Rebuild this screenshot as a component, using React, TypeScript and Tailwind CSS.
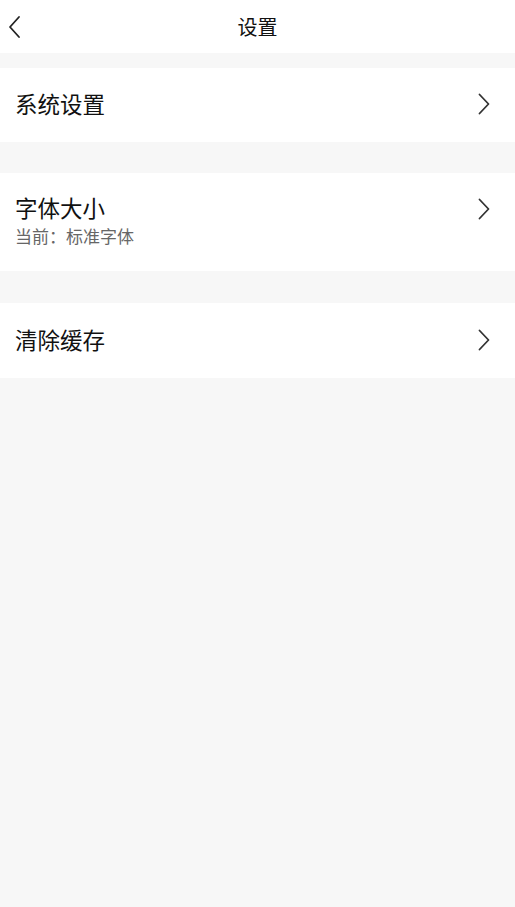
const font = { fontFamily: '"Noto Sans CJK SC", "Noto Sans", sans-serif' };

function Chevron() {
  return (
    <svg width="14" height="22" viewBox="0 0 14 22" className="shrink-0">
      <path d="M2.5 1.5 L11.5 11 L2.5 20.5" fill="none" stroke="#333" strokeWidth="1.8" strokeLinecap="round" strokeLinejoin="round" />
    </svg>
  );
}

function Row({ title, h }: { title: string; h: string }) {
  return (
    <div className={`bg-white flex items-center justify-between pl-[15px] pr-[24px] ${h}`}>
      <span className="text-[22.5px] leading-[28px] text-[#111] -mt-[4px]">{title}</span>
      <div className="-mt-[2px]">
        <Chevron />
      </div>
    </div>
  );
}

export default function App() {
  return (
    <div className="w-[515px] h-[907px] bg-[#f7f7f7] flex flex-col" style={font}>
      <div className="h-[53px] bg-white relative flex items-center justify-center">
        <svg width="14" height="24" viewBox="0 0 14 24" className="absolute left-[7px] top-[15px]">
          <path d="M12 2 L3 12 L12 22" fill="none" stroke="#222" strokeWidth="1.8" strokeLinecap="round" strokeLinejoin="round" />
        </svg>
        <span className="text-[20px] text-[#111]">设置</span>
      </div>
      <div className="mt-[15px]">
        <Row title="系统设置" h="h-[74px]" />
      </div>
      <div className="mt-[31px]">
        <div className="bg-white h-[98px] flex items-start justify-between pl-[15px] pr-[24px] pt-[21px]">
          <div className="flex flex-col">
            <span className="text-[22.5px] leading-[26px] text-[#111]">字体大小</span>
            <span className="text-[17px] leading-[22px] text-[#666] mt-[5px]">当前：标准字体</span>
          </div>
          <div className="pt-[4px]">
            <Chevron />
          </div>
        </div>
      </div>
      <div className="mt-[32px]">
        <Row title="清除缓存" h="h-[75px]" />
      </div>
    </div>
  );
}
